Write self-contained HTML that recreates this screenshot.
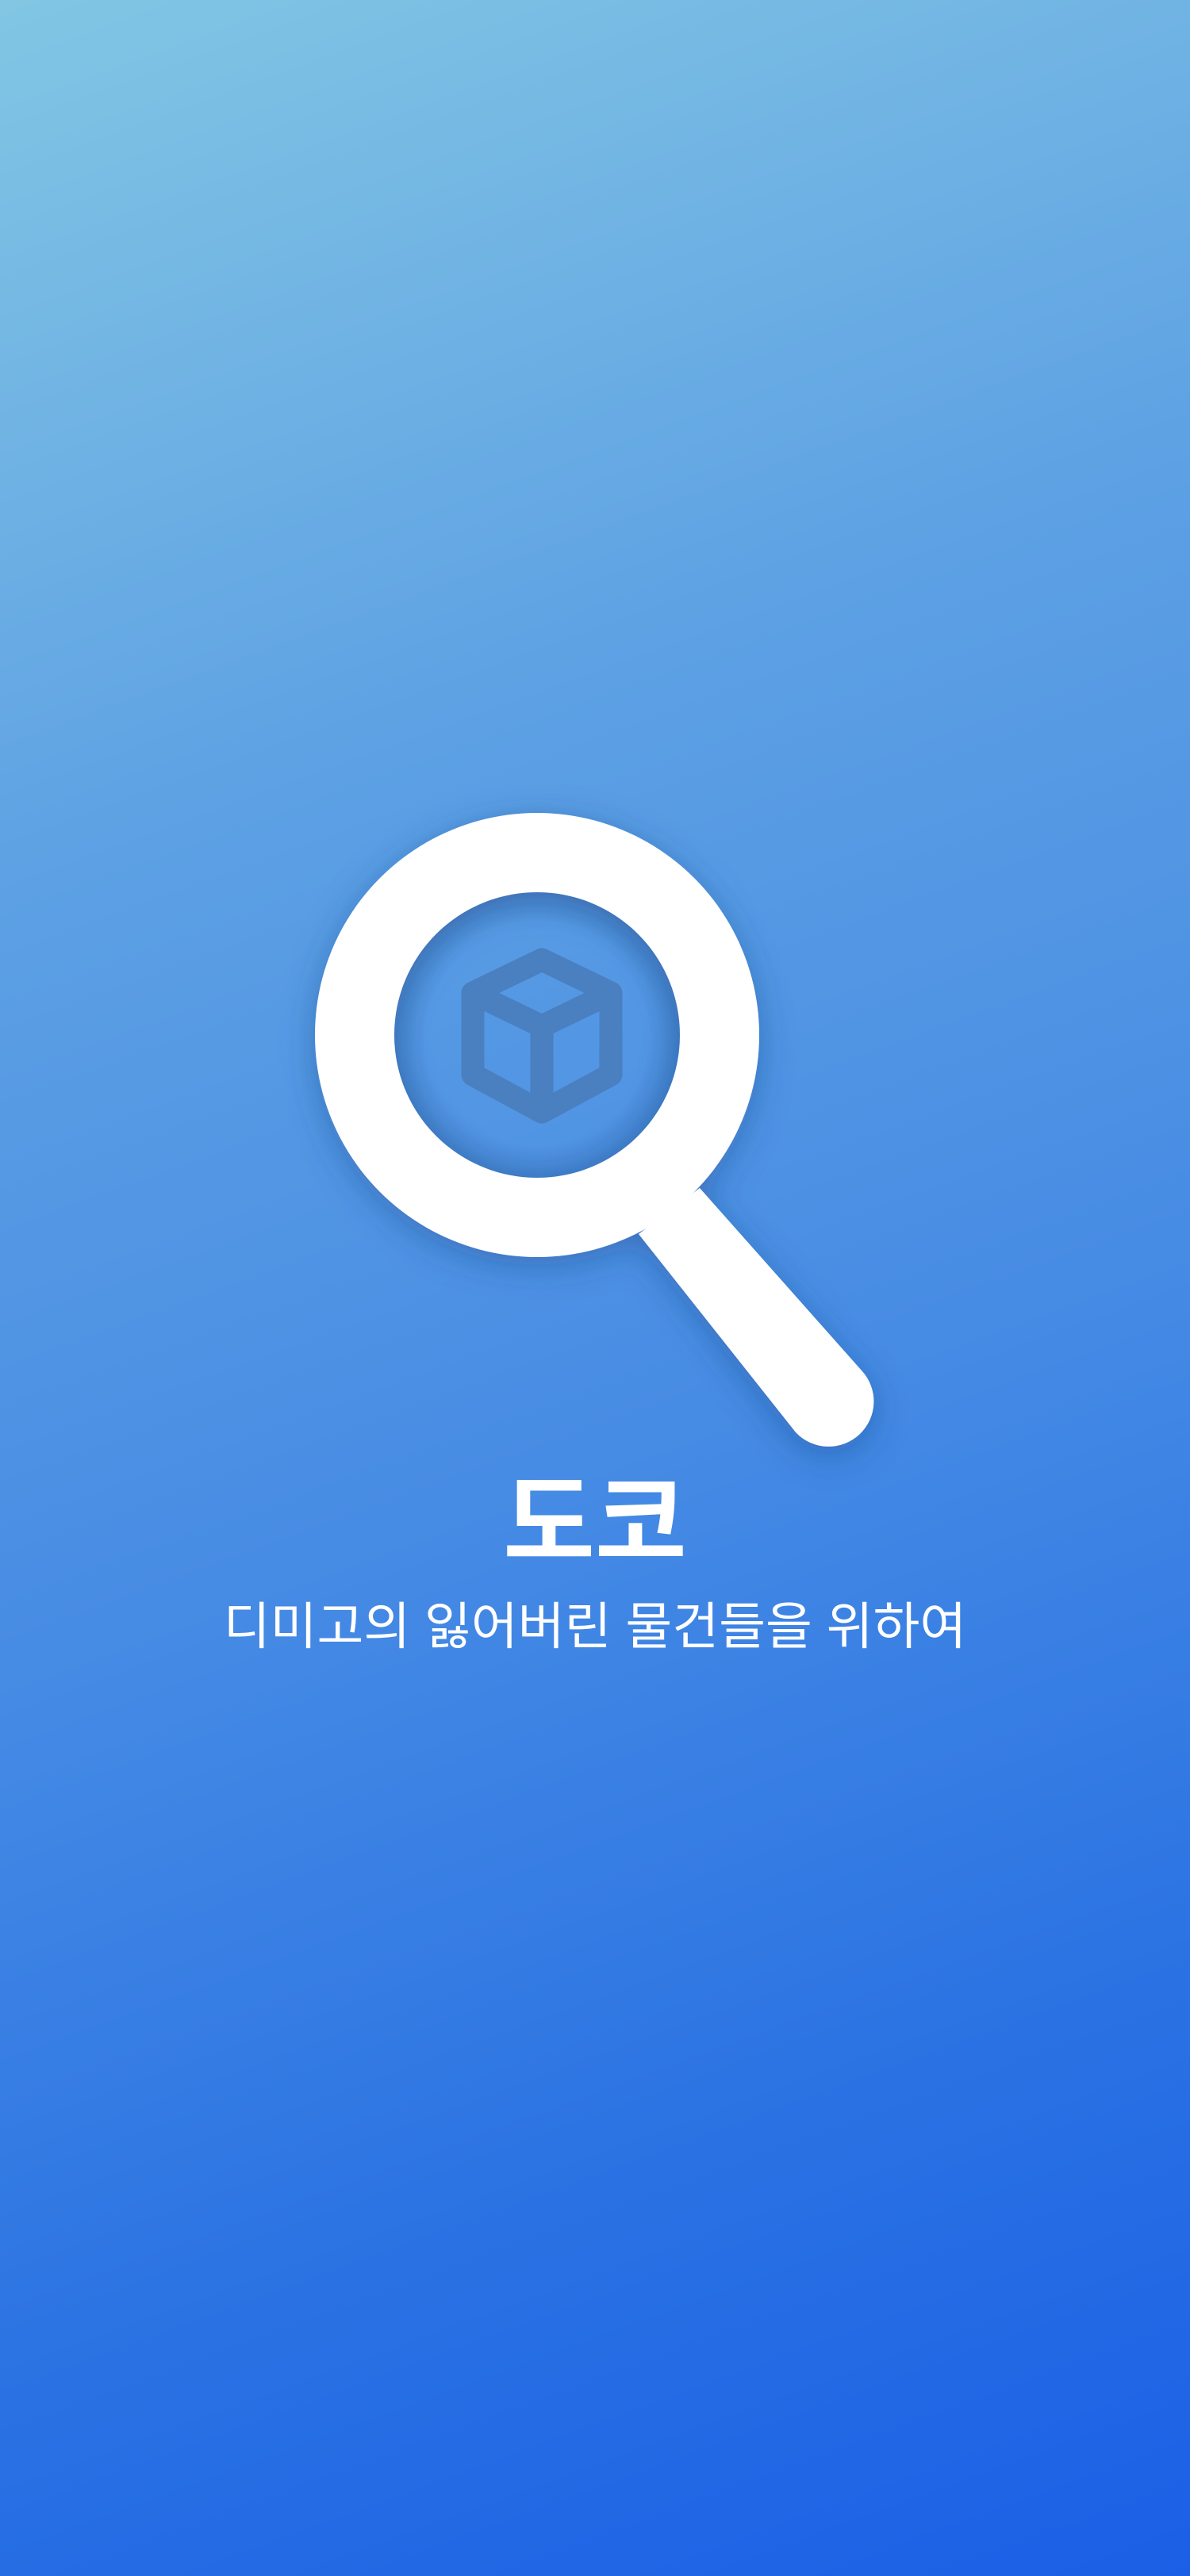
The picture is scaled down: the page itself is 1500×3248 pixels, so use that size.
<!DOCTYPE html>
<html><head><meta charset="utf-8"><style>
html,body{margin:0;padding:0}
body{width:1500px;height:3248px;overflow:hidden;position:relative;
background:linear-gradient(160deg,#82c6e4 0%,#5da0e4 30%,#478ce4 55%,#2a72e3 80%,#1b5fe6 100%);
font-family:"Liberation Sans","Noto Sans CJK KR",sans-serif;color:#fff}
svg{position:absolute;left:0;top:0}
.t{position:absolute;left:0;width:1500px;text-align:center;white-space:nowrap}
</style></head><body>
<svg width="1500" height="3248" viewBox="0 0 1500 3248">
<defs>
<filter id="ds" x="-30%" y="-30%" width="160%" height="160%">
<feDropShadow dx="0" dy="10" stdDeviation="22" flood-color="#1a3f80" flood-opacity="0.4"/>
</filter>
<radialGradient id="inner" cx="677" cy="1305" r="180" gradientUnits="userSpaceOnUse">
<stop offset="0.78" stop-color="#2a5a9a" stop-opacity="0"/>
<stop offset="1" stop-color="#2a5a9a" stop-opacity="0.3"/>
</radialGradient>
</defs>
<g filter="url(#ds)" fill="#fff">
<path fill-rule="evenodd" d="M677 1025a280 280 0 1 0 0.01 0Z M677 1125a180 180 0 1 1 -0.01 0Z"/>
<path d="M805 1556L882 1498L1086 1728A52 52 0 0 1 1003 1806Z"/>
</g>
<circle cx="677" cy="1305" r="180" fill="url(#inner)"/>
<g fill="none" stroke="#4a7fc0" stroke-width="29" stroke-linejoin="round">
<path d="M683 1210L770 1252L770 1355L683 1402L596 1355L596 1252Z"/>
<path d="M596 1252L683 1294L770 1252M683 1294L683 1402"/>
</g>
</svg>
<div class="t" style="top:1846px;font-size:126px;font-weight:bold;line-height:150px">도코</div>
<div class="t" style="top:2006px;font-size:64px;line-height:90px">디미고의 잃어버린 물건들을 위하여</div>
</body></html>
